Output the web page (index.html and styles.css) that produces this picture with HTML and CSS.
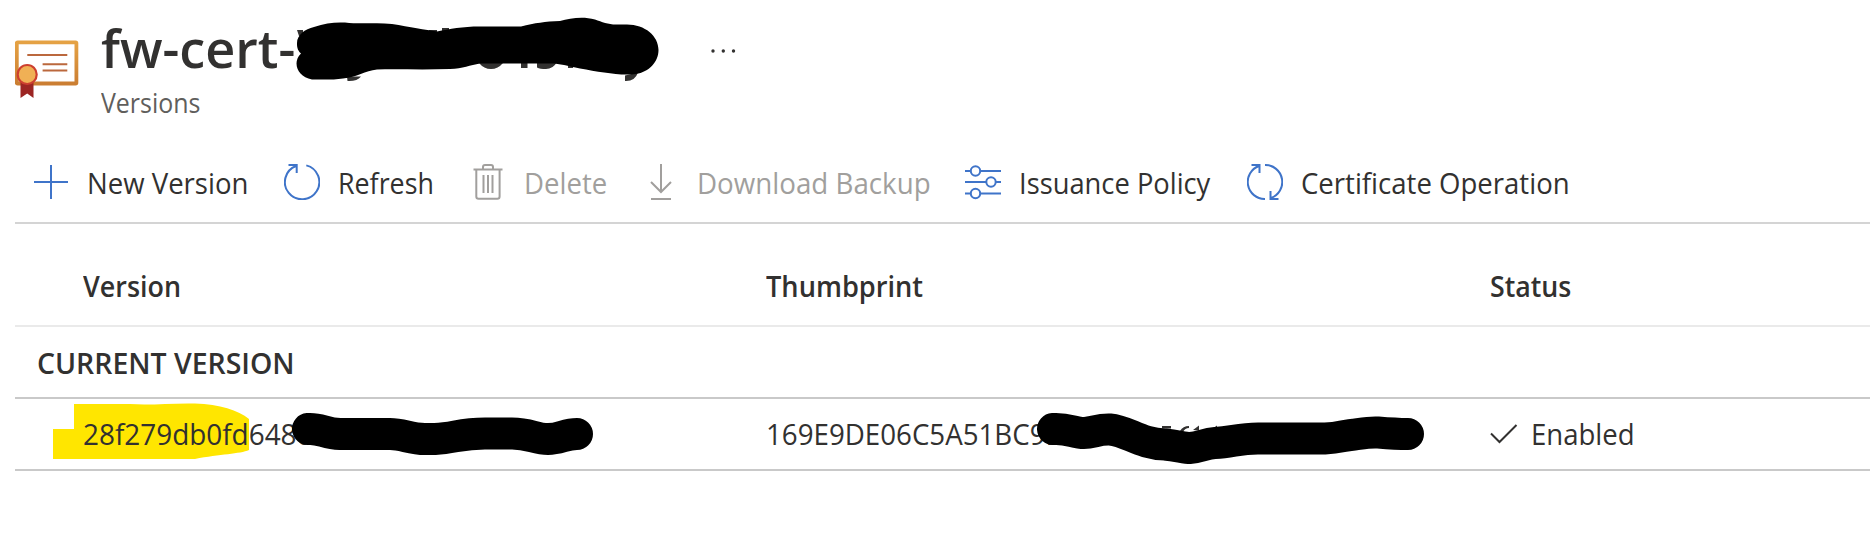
FILE: index.html
```html
<!DOCTYPE html>
<html lang="en">
<head>
<meta charset="utf-8">
<title>Versions</title>
<link rel="stylesheet" href="styles.css">
</head>
<body>
<header class="head">
  <svg class="cert" width="64" height="60" viewBox="0 0 64 60">
    <defs><linearGradient id="g" x1="0" y1="0" x2="0" y2="1"><stop offset="0" stop-color="#e5a244"/><stop offset="1" stop-color="#cb7e32"/></linearGradient></defs>
    <rect x="1.800" y="2.300" width="59.600" height="41.200" rx="0.800" fill="#fff" stroke="url(#g)" stroke-width="3.800"/>
    <path d="M12.300 15h40M27.600 24.300h24.700M27.600 30.600h24.700" stroke="#bb683d" stroke-width="2"/>
    <path d="M5.500 41h13v17l-6.300-4.500-6.700 4.500z" fill="#9c2523"/>
    <circle cx="12.200" cy="34.500" r="9.500" fill="#f0b055" stroke="#cd3f2f" stroke-width="2.200"/>
  </svg>
  <div class="names">
    <h1 class="title"><span class="fit t0">fw-cert-</span></h1>
    <div class="sub"><span class="fit t1">Versions</span></div>
  </div>
  <svg class="dots" width="28" height="6" viewBox="0 0 28 6" fill="#323130"><circle cx="3" cy="3" r="1.700"/><circle cx="13.300" cy="3" r="1.700"/><circle cx="23.500" cy="3" r="1.700"/></svg>
  <svg class="mark mark-title" width="380" height="84" viewBox="290 10 380 84">
    <path fill="#323130" d="M297 30h6v6h-4zM347 76.500h14q-4 5-13.500 4.500zM429 30h8v4h-8zM442 28h7v5h-7zM479 63h24q-5 6-12 6t-12-6M521 62h6.500v6h-6.500zM537 62h20q-4 7-11 7-6 0-9-1.500zM568 64h5v4h-5zM625 75.500l13-3q-3 9-13 8.500z"/>
    <path d="M297 43C297 35 305 29 314 27C325 23 335 22 345 22.500C362 24.500 377 22 392 24C410 27 425 30 437 31.500C450 29 462 26.500 480 26.500H521C535 23 545 21.500 560 21C570 18.500 582 16 595 19.500C602 22 608 24.500 616 24.500H627C645 24.500 658.500 36 658.500 50C658.500 62 649 72 636 74C620 76 600 72 580 68.500C567 66 560 63.500 551 63.500H480C470 65 463 68.500 450 69C425 70 400 69 377 69.500C365 71 357 77 343 78.500C333 80 322 79.500 312 79.500C297 77 292 62 301 53.500C297 50 297 46 297 43Z"/>
  </svg>
</header>
<nav class="bar">
  <div class="item"><svg class="ico" viewBox="0 0 36 36"><path d="M1 18h34M18 1v34"/></svg><span class="fit t2">New Version</span></div>
  <div class="item"><svg class="ico" viewBox="0 0 36 36"><path d="M22.300 1.400A17.200 17.200 0 1 1 12 2M4.500 1H12.700V9"/></svg><span class="fit t3">Refresh</span></div>
  <div class="item off"><svg class="ico" viewBox="0 0 36 36"><path d="M3.500 5.500h29M6.300 5.500V32.500q0 2.300 2.300 2.300h18.700q2.300 0 2.300-2.300V5.500M13 5.500V3q0-2 2-2h6q2 0 2 2v2.500M13.500 11v18M18 11v18M22.500 11v18"/></svg><span class="fit t4">Delete</span></div>
  <div class="item off"><svg class="ico" viewBox="0 0 36 36"><path d="M18 0v28M8 18l10 10 10-10M8 35h20"/></svg><span class="fit t5">Download Backup</span></div>
  <div class="item"><svg class="ico" viewBox="0 0 36 36"><path d="M0 7h5.500M15.500 7H36M0 18h21M31 18h5M0 29.500h5.500M15.500 29.500H36"/><circle cx="10.500" cy="7" r="4.700"/><circle cx="26" cy="18" r="4.700"/><circle cx="10.500" cy="29.500" r="4.700"/></svg><span class="fit t6">Issuance Policy</span></div>
  <div class="item"><svg class="ico" viewBox="0 0 36 36"><path d="M18 35A17 17 0 0 1 12 2M4.500 1H12.500V9M18 1A17 17 0 0 1 24 34M31.500 35H23.500V27"/></svg><span class="fit t7">Certificate Operation</span></div>
</nav>
<main class="table">
  <div class="row cols"><span class="fit t8">Version</span><span class="fit t9">Thumbprint</span><span class="fit t10">Status</span></div>
  <div class="row group"><span class="fit t11">CURRENT VERSION</span></div>
  <div class="row data">
    <div class="cell">
      <svg class="mark mark-yellow" width="200" height="60" viewBox="50 400 200 60"><path fill="#ffe600" d="M74 403H130C150 404.500 170 402 195 402.500C220 403.500 238 409 249 418V449C240 453 220 453 195 458H53V428H74Z"/></svg>
      <span class="fit t12">28f279db0fd6480</span>
      <svg class="mark mark-version" width="310" height="48" viewBox="288 408 310 48"><path d="M308 428C320 427 325 432.500 340 433H390C403 433 410 438 425 438H435C455 437 460 432.500 485 432.500H512C530 432.500 535 438 548 438C560 438 565 433 577 433"/></svg>
    </div>
    <div class="cell">
      <span class="fit t13">169E9DE06C5A51BC9B</span>
      <svg class="mark mark-thumb" width="400" height="60" viewBox="1030 405 400 60"><path stroke="none" fill="#323130" d="M1162 425h9v2.500h-9zM1180 430q3-5 9-5v2q-4 0-6 4zM1193 429l6-4.500v5zM1211 429l6-4.500v4z"/><path d="M1053 428C1068 427 1074 432 1084 432C1093 432 1098 428 1110 428.500C1128 430 1140 443 1165 443.500C1178 445 1185 447 1190 447C1200 446.500 1205 442.500 1215 442C1232 441.500 1238 437.500 1258 437.500H1325C1340 437 1345 434 1355 433.500C1365 432 1370 431 1378 431.500C1390 432.500 1398 433 1408 433"/></svg>
    </div>
    <div class="cell status"><svg width="28" height="20" viewBox="0 0 28 20"><path d="M1 9.500L9.500 18 26.500 1" fill="none" stroke="#323130" stroke-width="2"/></svg><span class="fit t14">Enabled</span></div>
  </div>
</main>
</body>
</html>
```
FILE: styles.css
```css
* { box-sizing: border-box; }
body { margin: 0; height: 550px; overflow: hidden; background: #fff; color: #323130; font: 29px "Open Sans", "Noto Sans", sans-serif; }
.fit { display: block; flex: none; white-space: nowrap; transform-origin: 0 50%; transform: scaleX(.95); }
.head { position: relative; display: flex; height: 142px; padding-left: 15px; }
.cert { flex: none; margin-top: 40px; }
.names { width: 608px; padding: 16px 0 0 22px; }
.title { margin: 0; font-size: 53px; font-weight: 600; line-height: 64px; }
.sub { font-size: 26.5px; line-height: 46px; color: #605e5c; }
.dots { margin: 48px 0 0 23px; }
.mark { position: absolute; overflow: visible; }
.mark-title { left: 290px; top: 10px; }
.bar { display: flex; gap: 35px; height: 82px; margin-left: 15px; padding-left: 18px; border-bottom: 2px solid #d4d4d4; }
.item { display: flex; align-items: center; gap: 18px; height: 80px; }
.ico { width: 36px; height: 36px; flex: none; fill: none; stroke: #3f74c9; stroke-width: 2; }
.off { color: #a19f9d; }
.off .ico { stroke: #a19f9d; }
.table { margin-left: 15px; }
.row { display: grid; grid-template-columns: 683px 724px 1fr; align-items: center; height: 72px; padding-left: 67.5px; border-bottom: 2px solid #c9c9c9; }
.cols { height: 103px; padding-top: 21px; border-color: #eaeaea; font-weight: 600; }
.group { padding-left: 22px; font-weight: 600; }
.cell { position: relative; }
.cell .fit { position: relative; }
.data .fit { top: -0.5px; }
.status { display: flex; align-items: center; gap: 13px; }
.mark-yellow { left: -32.5px; top: -14px; }
.mark-version, .mark-thumb { fill: none; stroke: #000; stroke-width: 32; stroke-linecap: round; stroke-linejoin: round; }
.mark-version { left: 205.5px; top: -6px; }
.mark-thumb { left: 264.5px; top: -9px; }
.t0 { transform: scaleX(.985); }
.t1 { transform: scaleX(.94); }
.t2 { width: 162px; }
.t3 { width: 97px; transform: scaleX(.925); }
.t4 { width: 84px; }
.t5 { width: 233px; transform: scaleX(.956); }
.t6 { width: 193px; transform: scaleX(.942); }
.t7 { width: 268px; }
.t8 { transform: scaleX(.928); }
.t9 { transform: scaleX(.938); }
.t10 { transform: scaleX(.922); }
.t11 { transform: scaleX(.98); }
.t12 { transform: scaleX(.962); }
.t13 { transform: scaleX(.955); }
```
